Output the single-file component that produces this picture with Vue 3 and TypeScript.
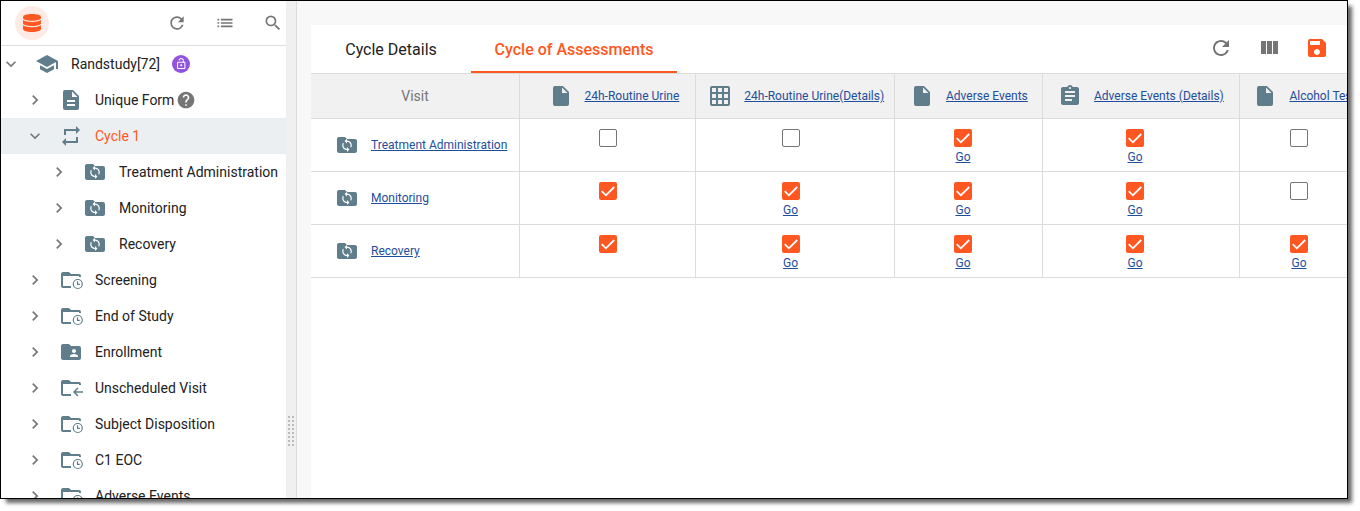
<template>
  <div class="page">
    <div class="window">
      <aside class="sidebar">
        <header class="sidebar__header">
          <span class="sidebar__logo">
            <svg class="icon icon--db" viewBox="0 0 18 18">
              <path d="M0 3.2C0 1.2 3.6 0 9 0s9 1.2 9 3.2v.9c0 1.6-3.6 2.7-9 2.7S0 5.7 0 4.1z" />
              <path d="M0 6c1.6 1.3 4.8 2 9 2s7.4-.7 9-2v3.3c0 1.6-3.6 2.7-9 2.7S0 10.9 0 9.3z" />
              <path d="M0 11.3c1.6 1.3 4.8 2 9 2s7.400-.7 9-2v3.5C18 16.8 14.4 18 9 18s-9-1.2-9-3.2z" />
            </svg>
          </span>
          <div class="sidebar__tools">
            <svg v-for="name in sidebarTools" :key="name" class="icon icon--small" viewBox="0 0 24 24">
              <path :d="icons[name]" />
            </svg>
          </div>
        </header>

        <ul class="tree">
          <li
            v-for="node in nodes"
            :key="node.label"
            class="tree__row"
            :class="{ 'tree__row--active': node.active }"
            :style="{ paddingLeft: `${node.level * 24}px` }"
          >
            <svg class="icon icon--small" viewBox="0 0 24 24">
              <path :d="node.open ? icons.expand : icons.chevron" />
            </svg>
            <svg class="icon tree__icon" viewBox="0 0 24 24">
              <path :d="icons[node.icon]" />
              <path v-if="node.icon === 'folderSync'" class="icon__cutout" transform="translate(4.8 5.1) scale(.6)" :d="icons.sync" />
              <g v-if="node.icon === 'folderOpen' && !node.back" class="icon__line">
                <circle cx="18.8" cy="16" r="4.5" />
                <path d="M18.500 13.300v3h2.300" />
              </g>
              <path v-if="node.back" class="icon__line icon__line--bold" d="M24 16h-9M19 12l-4 4 4 4" />
            </svg>
            <span class="tree__label">{{ node.label }}</span>
            <span v-if="node.badge === 'lock'" class="tree__lock">
              <svg viewBox="0 0 18 18">
                <path transform="translate(3 2.500) scale(.52)" :d="icons.lockOpen" />
              </svg>
            </span>
            <svg v-if="node.badge === 'help'" class="icon icon--small" viewBox="0 0 24 24">
              <path :d="icons.help" />
            </svg>
          </li>
        </ul>
      </aside>

      <div class="splitter">
        <div class="splitter__grip">
          <i v-for="n in 16" :key="n" />
        </div>
      </div>

      <main class="content">
        <section class="panel">
          <nav class="tabs">
            <a class="tabs__item">Cycle Details</a>
            <a class="tabs__item tabs__item--active">Cycle of Assessments</a>
            <div class="tabs__actions">
              <svg
                v-for="name in panelTools"
                :key="name"
                class="icon"
                :class="{ 'icon--primary': name === 'save' }"
                viewBox="0 0 24 24"
              >
                <path :d="icons[name]" />
              </svg>
            </div>
          </nav>

          <div class="grid">
            <div class="grid__row grid__row--head">
              <div class="grid__cell grid__cell--visit">Visit</div>
              <div
                v-for="col in columns"
                :key="col.label"
                class="grid__cell"
                :style="{ width: `${col.width}px`, paddingLeft: `${col.indent}px` }"
              >
                <svg class="icon icon--blue" viewBox="0 0 24 24">
                  <path :d="icons[col.icon]" />
                </svg>
                <a class="link">{{ col.label }}</a>
              </div>
            </div>
            <div v-for="visit in visits" :key="visit.label" class="grid__row">
              <div class="grid__cell grid__cell--name">
                <svg class="icon icon--blue" viewBox="0 0 24 24">
                  <path :d="icons.folderSync" />
                  <path class="icon__cutout" transform="translate(4.8 5.1) scale(.6)" :d="icons.sync" />
                </svg>
                <a class="link">{{ visit.label }}</a>
              </div>
              <div
                v-for="(state, i) in visit.states"
                :key="i"
                class="grid__cell grid__cell--check"
                :style="{ width: `${columns[i].width}px`, paddingRight: `${columns[i].offset}px` }"
              >
                <span class="checkbox" :class="{ 'checkbox--on': state !== 'off' }">
                  <svg v-if="state !== 'off'" viewBox="0 0 18 18">
                    <path d="M2.7 9.2l4.2 4.1 8.3-8.3" />
                  </svg>
                </span>
                <a v-if="state === 'go'" class="link">Go</a>
              </div>
            </div>
          </div>
        </section>
      </main>
    </div>
  </div>
</template>

<script setup lang="ts">
type CheckState = 'off' | 'on' | 'go'

const icons = {
  refresh: 'M17.65 6.35A7.958 7.958 0 0 0 12 4c-4.42 0-7.99 3.58-7.99 8s3.57 8 7.99 8c3.73 0 6.84-2.55 7.73-6h-2.08A5.99 5.99 0 0 1 12 18c-3.31 0-6-2.69-6-6s2.69-6 6-6c1.66 0 3.14.69 4.22 1.78L13 11h7V4l-2.35 2.35z',
  list: 'M3 13h2v-2H3v2zm0 4h2v-2H3v2zm0-8h2V7H3v2zm4 4h14v-2H7v2zm0 4h14v-2H7v2zM7 7v2h14V7H7z',
  search: 'M15.5 14h-.79l-.28-.27A6.471 6.471 0 0 0 16 9.5 6.5 6.5 0 1 0 9.5 16c1.61 0 3.09-.59 4.23-1.57l.27.28v.79l5 4.99L20.49 19l-4.99-5zm-6 0C7.01 14 5 11.99 5 9.5S7.01 5 9.5 5 14 7.01 14 9.5 11.99 14 9.5 14z',
  expand: 'M16.59 8.59L12 13.17 7.41 8.59 6 10l6 6 6-6z',
  chevron: 'M10 6L8.59 7.41 13.17 12l-4.58 4.59L10 18l6-6z',
  school: 'M5 13.18v4L12 21l7-3.82v-4L12 17l-7-3.82zM12 3L1 9l11 6 9-4.91V17h2V9L12 3z',
  lockOpen: 'M12 17c1.1 0 2-.9 2-2s-.9-2-2-2-2 .9-2 2 .9 2 2 2zm6-9h-1V6c0-2.76-2.24-5-5-5S7 3.24 7 6h1.9c0-1.71 1.39-3.1 3.1-3.1s3.1 1.39 3.1 3.1v2H6c-1.1 0-2 .9-2 2v10c0 1.1.9 2 2 2h12c1.1 0 2-.9 2-2V10c0-1.1-.9-2-2-2zm0 12H6V10h12v10z',
  doc: 'M14 2H6c-1.1 0-1.99.9-1.99 2L4 20c0 1.1.89 2 1.99 2H18c1.1 0 2-.9 2-2V8l-6-6zm2 16H8v-2h8v2zm0-4H8v-2h8v2zm-3-5V3.5L18.5 9H13z',
  file: 'M6 2c-1.1 0-1.99.9-1.99 2L4 20c0 1.1.89 2 1.99 2H18c1.1 0 2-.9 2-2V8l-6-6H6zm7 7V3.5L18.5 9H13z',
  repeat: 'M7 7h10v3l4-4-4-4v3H5v6h2V7zm10 10H7v-3l-4 4 4 4v-3h12v-6h-2v4z',
  folderSync: 'M10 4H4c-1.1 0-1.99.9-1.99 2L2 18c0 1.1.9 2 2 2h16c1.1 0 2-.9 2-2V8c0-1.1-.9-2-2-2h-8l-2-2z',
  sync: 'M12 4V1L8 5l4 4V6c3.31 0 6 2.69 6 6 0 1.01-.25 1.97-.7 2.8l1.46 1.46A7.93 7.93 0 0 0 20 12c0-4.42-3.58-8-8-8zm0 14c-3.31 0-6-2.69-6-6 0-1.01.25-1.97.7-2.8L5.24 7.74A7.93 7.93 0 0 0 4 12c0 4.42 3.58 8 8 8v3l4-4-4-4v3z',
  folderOpen: 'M12 20H4c-1.1 0-2-.9-2-2V6c0-1.1.9-2 2-2h6l2 2h8c1.1 0 2 .9 2 2v1h-2V8H4v10h8z',
  folderShared: 'M20 6h-8l-2-2H4c-1.1 0-1.99.9-1.99 2L2 18c0 1.1.9 2 2 2h16c1.1 0 2-.9 2-2V8c0-1.1-.9-2-2-2zm-5 3c1.1 0 2 .9 2 2s-.9 2-2 2-2-.9-2-2 .9-2 2-2zm4 8h-8v-1c0-1.33 2.67-2 4-2s4 .67 4 2v1z',
  help: 'M12 2C6.48 2 2 6.48 2 12s4.48 10 10 10 10-4.48 10-10S17.52 2 12 2zm1 17h-2v-2h2v2zm2.07-7.75l-.9.92C13.45 12.9 13 13.5 13 15h-2v-.5c0-1.1.45-2.1 1.17-2.83l1.24-1.26c.37-.36.59-.86.59-1.41 0-1.1-.9-2-2-2s-2 .9-2 2H8c0-2.21 1.79-4 4-4s4 1.79 4 4c0 .88-.36 1.68-.93 2.25z',
  table: 'M20 2H4c-1.1 0-2 .9-2 2v16c0 1.1.9 2 2 2h16c1.1 0 2-.9 2-2V4c0-1.1-.9-2-2-2zM8 20H4v-4h4v4zm0-6H4v-4h4v4zm0-6H4V4h4v4zm6 12h-4v-4h4v4zm0-6h-4v-4h4v4zm0-6h-4V4h4v4zm6 12h-4v-4h4v4zm0-6h-4v-4h4v4zm0-6h-4V4h4v4z',
  clipboard: 'M19 3h-4.18C14.4 1.84 13.3 1 12 1c-1.3 0-2.4.84-2.82 2H5c-1.1 0-2 .9-2 2v14c0 1.1.9 2 2 2h14c1.1 0 2-.9 2-2V5c0-1.1-.9-2-2-2zm-7 0c.55 0 1 .45 1 1s-.45 1-1 1-1-.45-1-1 .45-1 1-1zm2 14H7v-2h7v2zm3-4H7v-2h10v2zm0-4H7V7h10v2z',
  columns: 'M10 18h5V5h-5v13zm-6 0h5V5H4v13zM16 5v13h5V5h-5z',
  save: 'M17 3H5a2 2 0 0 0-2 2v14a2 2 0 0 0 2 2h14c1.1 0 2-.9 2-2V7l-4-4zm-5 16c-1.66 0-3-1.34-3-3s1.34-3 3-3 3 1.34 3 3-1.34 3-3 3zm3-10H5V5h10v4z',
}

type IconName = keyof typeof icons

interface TreeNode {
  label: string
  level: number
  icon: IconName
  open?: boolean
  active?: boolean
  back?: boolean
  badge?: 'lock' | 'help'
}

const sidebarTools: IconName[] = ['refresh', 'list', 'search']
const panelTools: IconName[] = ['refresh', 'columns', 'save']

const nodes: TreeNode[] = [
  { label: 'Randstudy[72]', level: 0, icon: 'school', open: true, badge: 'lock' },
  { label: 'Unique Form', level: 1, icon: 'doc', badge: 'help' },
  { label: 'Cycle 1', level: 1, icon: 'repeat', open: true, active: true },
  { label: 'Treatment Administration', level: 2, icon: 'folderSync' },
  { label: 'Monitoring', level: 2, icon: 'folderSync' },
  { label: 'Recovery', level: 2, icon: 'folderSync' },
  { label: 'Screening', level: 1, icon: 'folderOpen' },
  { label: 'End of Study', level: 1, icon: 'folderOpen' },
  { label: 'Enrollment', level: 1, icon: 'folderShared' },
  { label: 'Unscheduled Visit', level: 1, icon: 'folderOpen', back: true },
  { label: 'Subject Disposition', level: 1, icon: 'folderOpen' },
  { label: 'C1 EOC', level: 1, icon: 'folderOpen' },
  { label: 'Adverse Events', level: 1, icon: 'folderOpen' },
]

const columns: { label: string; icon: IconName; width: number; indent: number; offset: number }[] = [
  { label: '24h-Routine Urine', icon: 'file', width: 176, indent: 28.5, offset: 0 },
  { label: '24h-Routine Urine(Details)', icon: 'table', width: 199, indent: 12.3, offset: 9 },
  { label: 'Adverse Events', icon: 'file', width: 148, indent: 15, offset: 11 },
  { label: 'Adverse Events (Details)', icon: 'clipboard', width: 197, indent: 15, offset: 12 },
  { label: 'Alcohol Test', icon: 'file', width: 130, indent: 13.4, offset: 11 },
]

const visits: { label: string; states: CheckState[] }[] = [
  { label: 'Treatment Administration', states: ['off', 'off', 'go', 'go', 'off'] },
  { label: 'Monitoring', states: ['on', 'go', 'go', 'go', 'off'] },
  { label: 'Recovery', states: ['on', 'go', 'go', 'go', 'go'] },
]
</script>

<style>
body {
  margin: 0;
  background: #fff;
}
</style>

<style scoped>
.page {
  height: 511px;
  overflow: hidden;
}

.window {
  box-sizing: border-box;
  display: flex;
  width: 1348px;
  height: 499px;
  border: 1px solid #000;
  background: #f8f8f8;
  box-shadow: 5px 5px 4px -1px rgba(0, 0, 0, 0.6);
  font-family: Roboto, sans-serif;
  font-size: 14px;
  color: #212121;
}

.icon {
  flex: none;
  width: 24px;
  height: 24px;
  fill: #757575;
}

.icon--small {
  width: 20px;
  height: 20px;
}

.icon--db {
  width: 18px;
  height: 18px;
  fill: #ff5722;
}

.icon--primary {
  fill: #ff5722;
}

.icon--blue {
  fill: #607d8b;
}

.icon__cutout {
  fill: #fff;
}

.icon__line {
  fill: none;
  stroke: #607d8b;
  stroke-width: 1.2;
}

.icon__line--bold {
  stroke-width: 1.5;
}

.sidebar {
  flex: none;
  width: 285px;
  overflow: hidden;
  background: #fff;
}

.sidebar__header {
  display: flex;
  align-items: center;
  justify-content: space-between;
  height: 44px;
  padding: 0 3px 0 14px;
  border-bottom: 1px solid #dedede;
}

.sidebar__logo {
  display: flex;
  align-items: center;
  justify-content: center;
  width: 34px;
  height: 34px;
  border-radius: 50%;
  background: #ffebe5;
}

.sidebar__tools {
  display: flex;
  gap: 28px;
}

.tree {
  margin: 0;
  padding: 0;
  list-style: none;
}

.tree__row {
  display: flex;
  align-items: center;
  height: 36px;
  white-space: nowrap;
}

.tree__row--active {
  background: #eceff1;
}

.tree__row--active .tree__label {
  color: #ff5722;
}

.tree__icon {
  margin: 0 12px 0 14px;
  overflow: visible;
  fill: #607d8b;
}

.tree__lock {
  width: 18px;
  height: 18px;
  margin-left: 12px;
  border-radius: 50%;
  background: #9254de;
}

.tree__lock svg {
  display: block;
  fill: #fff;
}

.tree__label + .icon {
  margin-left: 2px;
}

.splitter {
  display: flex;
  flex: none;
  justify-content: center;
  width: 10px;
  border-right: 1px solid #dcdcdc;
  background: #f0f0f0;
}

.splitter__grip {
  display: grid;
  grid-template-columns: 2px 2px;
  grid-auto-rows: 2px;
  gap: 2px;
  margin-top: 415px;
}

.splitter__grip i {
  background: #bdbdbd;
}

.content {
  display: flex;
  flex: 1;
  min-width: 0;
  padding: 24px 0 0 14px;
}

.panel {
  flex: 1;
  min-width: 0;
  overflow: hidden;
  background: #fff;
}

.tabs {
  display: flex;
  height: 48px;
  border-bottom: 1px solid #dcdcdc;
}

.tabs__item {
  box-sizing: border-box;
  width: 160px;
  padding-top: 2px;
  font-size: 16px;
  line-height: 46px;
  text-align: center;
  white-space: nowrap;
}

.tabs__item--active {
  width: 206px;
  border-bottom: 2px solid #ff5722;
  font-weight: 500;
  color: #ff5722;
}

.tabs__actions {
  display: flex;
  align-items: center;
  gap: 24px;
  margin-left: auto;
  padding: 0 18px 2px 0;
}

.grid {
  width: max-content;
}

.grid__row {
  display: flex;
  height: 52px;
  border-bottom: 1px solid #dcdcdc;
}

.grid__row--head {
  height: 44px;
  background: #f1f1f1;
}

.grid__cell {
  box-sizing: border-box;
  display: flex;
  align-items: center;
  gap: 12px;
  border-right: 1px solid #dcdcdc;
  white-space: nowrap;
}

.grid__cell--visit,
.grid__cell--name {
  width: 209px;
}

.grid__cell--visit {
  justify-content: center;
  color: #757575;
}

.grid__cell--name {
  padding-left: 24px;
}

.grid__cell--check {
  flex-direction: column;
  gap: 2px;
  padding-top: 10px;
}

.link {
  font-size: 12px;
  line-height: 16px;
  color: #1e4e9c;
  text-decoration: underline;
}

.checkbox {
  box-sizing: border-box;
  flex: none;
  width: 18px;
  height: 18px;
  border: 1px solid #757575;
  border-radius: 2px;
}

.checkbox--on {
  border: 0;
  background: #ff5722;
}

.checkbox svg {
  display: block;
  fill: none;
  stroke: #fff;
  stroke-width: 1.8;
}
</style>
